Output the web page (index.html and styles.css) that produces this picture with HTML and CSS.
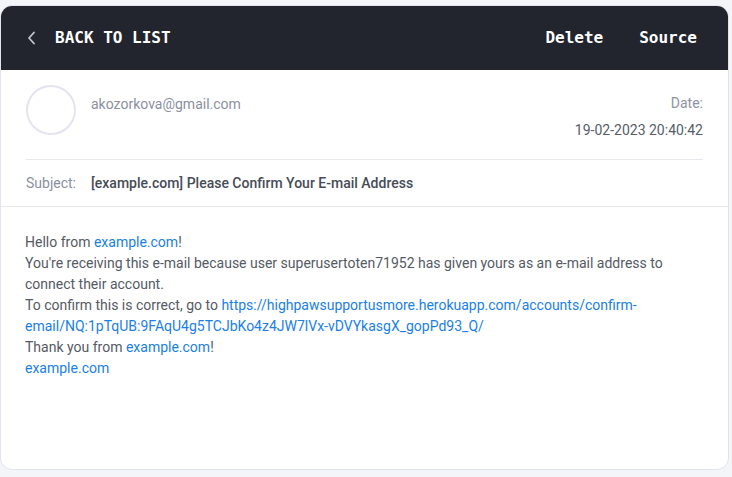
FILE: index.html
```html
<!DOCTYPE html>
<html lang="en">
<head>
<meta charset="utf-8">
<title>Message</title>
<link rel="stylesheet" href="styles.css">
</head>
<body>
<div class="card">
  <div class="topbar">
    <a class="back" href="#">
      <svg class="chev" width="9" height="14" viewBox="0 0 9 14"><polyline points="7,1.5 2,7 7,12.5" fill="none" stroke="#c3c6cd" stroke-width="1.8" stroke-linecap="round" stroke-linejoin="round"/></svg>
      <span>BACK TO LIST</span>
    </a>
    <div class="actions">
      <a href="#">Delete</a>
      <a href="#">Source</a>
    </div>
  </div>
  <div class="meta">
    <div class="from-row">
      <div class="avatar"></div>
      <div class="from">akozorkova@gmail.com</div>
      <div class="date">
        <div class="date-label">Date:</div>
        <div class="date-value">19-02-2023 20:40:42</div>
      </div>
    </div>
    <div class="subject-row">
      <span class="subject-label">Subject:</span>
      <span class="subject-value">[example.com] Please Confirm Your E-mail Address</span>
    </div>
  </div>
  <div class="content">
    Hello from <a href="#">example.com</a>!<br>
    You're receiving this e-mail because user superusertoten71952 has given yours as an e-mail address to connect their account.<br>
    To confirm this is correct, go to <a href="#">https://highpawsupportusmore.herokuapp.com/accounts/confirm-email/NQ:1pTqUB:9FAqU4g5TCJbKo4z4JW7lVx-vDVYkasgX_gopPd93_Q/</a><br>
    Thank you from <a href="#">example.com</a>!<br>
    <a href="#">example.com</a>
  </div>
</div>
</body>
</html>
```
FILE: styles.css
```css
html, body {
  margin: 0;
  padding: 0;
}
body {
  background: #f4f5f8;
  padding: 5px 3px 0 0;
  font-family: Roboto, "Noto Sans", Arial, sans-serif;
}
.card {
  height: 465px;
  box-sizing: border-box;
  background: #fff;
  border: 1px solid #e3e2ef;
  border-radius: 12px;
  overflow: hidden;
}
.topbar {
  height: 65px;
  margin: -1px -1px 0 -1px;
  background: #22252d;
  display: flex;
  align-items: center;
  justify-content: space-between;
  padding: 0 32px 0 27px;
  font-family: "DejaVu Sans Mono", "Liberation Mono", monospace;
  font-weight: bold;
  font-size: 16px;
  color: #fff;
}
.topbar a {
  color: #fff;
  text-decoration: none;
}
.back {
  display: flex;
  align-items: center;
  gap: 19px;
}
.chev {
  display: block;
  margin-top: 1px;
}
.actions {
  display: flex;
  gap: 36px;
}
.meta {
  padding: 0 25px 0 25px;
}
.from-row {
  display: flex;
  align-items: flex-start;
  padding: 15px 0 23px;
  border-bottom: 1px solid #e7e7ee;
  height: 51px;
}
.avatar {
  width: 46px;
  height: 46px;
  border: 2px solid #e5e3f0;
  border-radius: 50%;
  flex: none;
}
.from {
  margin-left: 15px;
  margin-top: 9px;
  font-size: 14px;
  line-height: 20px;
  color: #8b90a0;
  flex: 1;
}
.date {
  text-align: right;
  font-size: 14px;
  line-height: 20px;
  margin-top: 8px;
}
.date-label {
  color: #8e93a3;
}
.date-value {
  color: #585d69;
  margin-top: 7px;
}
.subject-row {
  height: 46px;
  display: flex;
  align-items: center;
  font-size: 14px;
}
.subject-label {
  color: #8b90a0;
  width: 65px;
}
.subject-value {
  color: #474c57;
  font-weight: 500;
}
.content {
  border-top: 1px solid #e7e7ee;
  margin: 0 -1px;
  padding: 25px 26px 0 25px;
  font-size: 14px;
  line-height: 21px;
  color: #555a64;
}
.content a {
  color: #1a80e8;
  text-decoration: none;
}
```
